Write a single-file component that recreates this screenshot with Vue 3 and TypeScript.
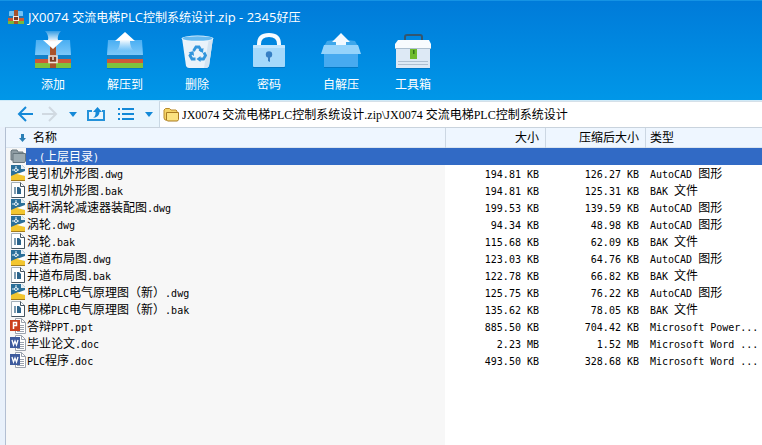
<script setup lang="ts">
import { computed, ref } from 'vue'

type Kind = 'dwg' | 'bak' | 'ppt' | 'doc'
interface Entry {
  name: string
  size: string
  packed: string
  type: string
  kind: Kind
}

const actions = [
  { id: 'add', label: '添加' },
  { id: 'extract', label: '解压到' },
  { id: 'delete', label: '删除' },
  { id: 'password', label: '密码' },
  { id: 'sfx', label: '自解压' },
  { id: 'tools', label: '工具箱' },
]

const archive = 'JX0074 交流电梯PLC控制系统设计'
const path = ref(`${archive}.zip\\${archive}`)

const CAD = 'AutoCAD 图形'
const BAK = 'BAK 文件'
const entries: Entry[] = [
  { name: '曳引机外形图.dwg', size: '194.81 KB', packed: '126.27 KB', type: CAD, kind: 'dwg' },
  { name: '曳引机外形图.bak', size: '194.81 KB', packed: '125.31 KB', type: BAK, kind: 'bak' },
  { name: '蜗杆涡轮减速器装配图.dwg', size: '199.53 KB', packed: '139.59 KB', type: CAD, kind: 'dwg' },
  { name: '涡轮.dwg', size: '94.34 KB', packed: '48.98 KB', type: CAD, kind: 'dwg' },
  { name: '涡轮.bak', size: '115.68 KB', packed: '62.09 KB', type: BAK, kind: 'bak' },
  { name: '井道布局图.dwg', size: '123.03 KB', packed: '64.76 KB', type: CAD, kind: 'dwg' },
  { name: '井道布局图.bak', size: '122.78 KB', packed: '66.82 KB', type: BAK, kind: 'bak' },
  { name: '电梯PLC电气原理图（新）.dwg', size: '125.75 KB', packed: '76.22 KB', type: CAD, kind: 'dwg' },
  { name: '电梯PLC电气原理图（新）.bak', size: '135.62 KB', packed: '78.05 KB', type: BAK, kind: 'bak' },
  { name: '答辩PPT.ppt', size: '885.50 KB', packed: '704.42 KB', type: 'Microsoft Power...', kind: 'ppt' },
  { name: '毕业论文.doc', size: '2.23 MB', packed: '1.52 MB', type: 'Microsoft Word ...', kind: 'doc' },
  { name: 'PLC程序.doc', size: '493.50 KB', packed: '328.68 KB', type: 'Microsoft Word ...', kind: 'doc' },
]

// Latin runs are set in their own face and size, so each text is split at script changes.
function runs(text: string) {
  return (text.match(/[\x20-\x7e]+|[^\x20-\x7e]+/g) ?? []).map((t) => ({ t, latin: /^[\x20-\x7e]/.test(t) }))
}

const titleRuns = runs(`${archive}.zip - 2345好压`)
const parentRuns = runs('..(上层目录)')
const rows = computed(() =>
  entries.map((e) => ({ ...e, nameRuns: runs(e.name), typeRuns: runs(e.type) })),
)
</script>

<template>
  <div class="window">
    <header class="top">
      <h1 class="title">
        <svg class="app-icon" viewBox="0 0 16 14" aria-hidden="true">
          <rect x="1" y="1" width="14" height="6" rx="1" fill="#72c3f5" />
          <rect x="0" y="6" width="16" height="3" fill="#1b78b8" />
          <rect x="0" y="8" width="16" height="3" fill="#d05a34" />
          <rect x="0" y="11" width="16" height="3" fill="#79b83a" />
          <rect x="6" y="0" width="4" height="14" fill="#a6512c" />
          <rect x="5.500" y="6.500" width="5" height="4" fill="#7c3520" stroke="#f4e4dc" />
        </svg>
        <span><span v-for="(r, i) in titleRuns" :key="i" :class="{ 'title-latin': r.latin }">{{ r.t }}</span></span>
      </h1>
      <nav class="actions">
        <button v-for="a in actions" :key="a.id" class="action" type="button">
          <svg class="action-icon" viewBox="0 0 40 40" aria-hidden="true">
            <defs>
              <linearGradient id="lid" x1="0" y1="0" x2="0" y2="1">
                <stop offset="0" stop-color="#49aef2" />
                <stop offset="1" stop-color="#7cc8fa" />
              </linearGradient>
              <linearGradient id="down" x1="0" y1="0" x2="0" y2="1">
                <stop offset="0" stop-color="#fff" stop-opacity="0.2" />
                <stop offset="0.6" stop-color="#fff" />
              </linearGradient>
              <linearGradient id="up" x1="0" y1="0" x2="0" y2="1">
                <stop offset="0.4" stop-color="#fff" />
                <stop offset="1" stop-color="#fff" stop-opacity="0" />
              </linearGradient>
            </defs>
            <g v-if="a.id === 'add' || a.id === 'extract'">
              <rect x="2" y="37" width="36" height="1" fill="#0269b0" opacity="0.6" />
              <path d="M3 9h34l1 15H2z" fill="url(#lid)" />
              <rect x="2" y="24" width="36" height="4" fill="#1280c8" />
              <rect x="2" y="28" width="36" height="4" fill="#cf5838" />
              <rect x="2" y="32" width="36" height="5" fill="#7fc23c" />
            </g>
            <g v-if="a.id === 'add'">
              <rect x="17" y="9" width="6" height="28" fill="#a9532c" />
              <path d="M17 24h6v4h-6z" fill="#7a3a20" />
              <rect x="16" y="25" width="8" height="6.500" fill="#7d3b22" stroke="#f1e3da" stroke-width="1.600" />
              <path d="M20 26v3" stroke="#f1e3da" stroke-width="1.500" />
              <path d="M12 0h16q-4 4-3 9h5L20 18 10 9h5Q16 4 12 0z" fill="url(#down)" />
            </g>
            <path v-if="a.id === 'extract'" d="M20 1 30 10h-5q0 7 4 10H11q4-3 4-10h-5z" fill="url(#up)" />
            <g v-if="a.id === 'delete'">
              <path d="M5 8h31l-4 28q-1 2-3 2H12q-2 0-3-2z" fill="#0873be" opacity="0.35" />
              <path d="M5 7h31l-4 28q-1 2-3 2H12q-2 0-3-2z" fill="#e9f2fa" />
              <path d="M32 7h4l-4 28q-1 2-3 2h-2z" fill="#d3e3f1" />
              <ellipse cx="20.500" cy="7.500" rx="16" ry="3" fill="#f8fcff" />
              <ellipse cx="20.500" cy="7.500" rx="15" ry="2.300" fill="#67baf0" />
              <g fill="none" stroke="#3295dc" stroke-width="2.800">
                <path d="m16.500 20 2.500-4h3l2.500 4" />
                <path d="m27 21.500 1.500 3-2 3.500h-4" />
                <path d="M18.500 28H15l-2-3.500 2-3" />
              </g>
              <path d="m26.500 17-.5 5-4.500-2.500zM23.500 25v6l-4-3zM11.500 21.500l5-1.500.5 5z" fill="#3295dc" />
            </g>
            <g v-if="a.id === 'password'">
              <path d="M10 16v-3q0-9 10-9t10 9v3" fill="none" stroke="#f8fcff" stroke-width="4" />
              <rect x="4" y="36" width="32" height="1" fill="#0269b0" opacity="0.6" />
              <rect x="4" y="14" width="32" height="22" rx="1" fill="#a5d9fb" />
              <path d="M4 15q0-1 1-1h30q1 0 1 1v2H4z" fill="#c2e6fe" />
              <circle cx="20" cy="23.500" r="3.200" fill="#367fc4" />
              <path d="M19 25h2v6l-2-1z" fill="#367fc4" />
            </g>
            <g v-if="a.id === 'sfx'">
              <path d="M6 10 2 17h36l-4-7-7-1H13z" fill="#59b5f0" opacity="0.7" />
              <path d="M20 2 29 11h-4v5H15v-5h-4z" fill="#f2f9ff" />
              <rect x="3" y="36" width="34" height="1" fill="#0269b0" opacity="0.6" />
              <path d="M3 17h34v19H3z" fill="#47aaf0" />
              <path d="M3 14h34l3 9H0z" fill="#95d3fb" />
            </g>
            <g v-if="a.id === 'tools'">
              <path d="M12 9V6q0-2 2-2h13q2 0 2 2v3" fill="none" stroke="#34566f" stroke-width="2" />
              <rect x="3" y="37" width="34" height="1" fill="#0269b0" opacity="0.6" />
              <path d="M3 16h34v21H3z" fill="#dde9f5" />
              <path d="M5 9h31l2 4v4H2v-4z" fill="#f8fbfe" />
              <path d="M2 17h36v1H2zM5 30h30v1H5zM5 33h30v1H5z" fill="#aebfd0" />
              <path d="M17 18h7v10h-7z" fill="#6fbb2e" />
              <path d="M20 19h1.500v4H20z" fill="#33701a" />
            </g>
          </svg>
          <span>{{ a.label }}</span>
        </button>
      </nav>
    </header>

    <div class="bar">
      <button class="tool" type="button" aria-label="后退">
        <svg viewBox="0 0 16 16"><path d="M9 1 2 8l7 7M2 8h14" fill="none" stroke="#1489d8" stroke-width="2" /></svg>
      </button>
      <button class="tool forward" type="button" aria-label="前进">
        <svg viewBox="0 0 16 16"><path d="m7 1 7 7-7 7M14 8H0" fill="none" stroke="#d0d9e1" stroke-width="2" /></svg>
      </button>
      <button class="tool caret" type="button" aria-label="历史">
        <svg viewBox="0 0 8 5"><path d="M0 0h8L4 5z" fill="#1489d8" /></svg>
      </button>
      <button class="tool wide" type="button" aria-label="向上">
        <svg viewBox="0 0 18 16">
          <path d="M5 5H1v9h16V5h-2" fill="none" stroke="#2492da" stroke-width="2" />
          <path d="M10.500 1 15 6h-2.500q0 5-6.500 6 3-2 2.500-6H6z" fill="#1489d8" />
        </svg>
      </button>
      <button class="tool list" type="button" aria-label="视图">
        <svg viewBox="0 0 16 12">
          <path d="M0 0h2v2H0zM0 5h2v2H0zM0 10h2v2H0zM4 0h12v2H4zM4 5h12v2H4zM4 10h12v2H4z" fill="#1489d8" />
        </svg>
      </button>
      <button class="tool caret" type="button" aria-label="视图选项">
        <svg viewBox="0 0 8 5"><path d="M0 0h8L4 5z" fill="#1489d8" /></svg>
      </button>
      <label class="address">
        <svg class="folder" viewBox="0 0 16 14" aria-hidden="true">
          <path d="M1 10V2l1.500-1.500h4L8 2h5l1 1v8l-2 1H2z" fill="#f4d365" stroke="#b98b2c" />
          <path d="M3.500 4.500h12v7l-1 1.500H4.500l-1-1z" fill="#fbe27f" stroke="#a87a20" />
        </svg>
        <input v-model="path" class="path" type="text" aria-label="路径" spellcheck="false" />
      </label>
    </div>

    <main class="pane">
      <table class="files">
        <colgroup>
          <col />
          <col class="c-size" />
          <col class="c-size" />
          <col class="c-type" />
        </colgroup>
        <thead>
          <tr>
            <th class="name-head">
              <svg class="sort" viewBox="0 0 7 8" aria-hidden="true">
                <path d="M2 0h3v4h2L3.500 8 0 4h2z" fill="#2b7fb6" />
              </svg>名称
            </th>
            <th class="num">大小</th>
            <th class="num">压缩后大小</th>
            <th>类型</th>
          </tr>
        </thead>
        <tbody>
          <tr class="selected">
            <td colspan="4">
              <div class="cell">
                <svg class="file-icon" viewBox="0 0 16 16" aria-hidden="true">
                  <path d="M1 12V3l1-1h5l1 2h5v8z" fill="#8f9ca3" stroke="#68777f" />
                  <path d="M3 5.500h12.500V13l-1 1.500H3z" fill="#9caab0" stroke="#66757c" />
                </svg>
                <span class="label"><span v-for="(r, i) in parentRuns" :key="i" :class="{ latin: r.latin }">{{ r.t }}</span></span>
              </div>
            </td>
          </tr>
          <tr v-for="row in rows" :key="row.name">
            <td>
              <div class="cell">
                <svg class="file-icon" viewBox="0 0 16 16" aria-hidden="true">
                  <g v-if="row.kind === 'dwg'">
                    <path d="M1 0h11l3 3v13H1z" fill="#2b6f99" />
                    <path d="M11 0h1l3 3v1h-4z" fill="#e6eff5" />
                    <path d="M1 11 8 8l7 3v4H1z" fill="#f3c62f" />
                    <path d="m7 9 8-3v5z" fill="#fff" />
                    <path d="M1 15h14v1H1z" fill="#a47c1c" />
                    <path d="M2 5h7M6 1v6" stroke="#e4f1f8" />
                    <circle cx="6" cy="5" r="1.500" fill="#2b6f99" stroke="#e4f1f8" />
                  </g>
                  <g v-else-if="row.kind === 'bak'">
                    <path d="M1.500.5h9l4 4v11h-13z" fill="#fff" stroke="#a4b0ba" />
                    <path d="M10.500.5v4h4v11h-13" fill="none" stroke="#44535f" />
                    <path d="M4 5h2v7H4z" fill="#7d9bb0" />
                    <path d="M7 5h2l2 2v5H7z" fill="#2c648b" />
                  </g>
                  <g v-else>
                    <path d="M5.500.5h6l4 4v11h-10z" fill="#fff" stroke="#9ba2ad" />
                    <path d="M11.500.5v4h4M10 7.500h4M10 9.500h4M10 11.500h4M7 13.500h7" fill="none" stroke="#9ba2ad" />
                    <path d="M0 2h10v11H0z" :fill="row.kind === 'ppt' ? '#cb3f1d' : '#3e5b9d'" />
                    <path v-if="row.kind === 'ppt'" d="M3.500 11V4.500h3v3h-3" fill="none" stroke="#fff" stroke-width="1.500" />
                    <path v-else d="m2 5 1.500 5L5 6l1.500 4L8 5" fill="none" stroke="#fff" stroke-width="1.300" />
                  </g>
                </svg>
                <span class="label"><span v-for="(r, i) in row.nameRuns" :key="i" :class="{ latin: r.latin }">{{ r.t }}</span></span>
              </div>
            </td>
            <td class="num"><span class="latin">{{ row.size }}</span></td>
            <td class="num"><span class="latin">{{ row.packed }}</span></td>
            <td class="type"><span v-for="(r, i) in row.typeRuns" :key="i" :class="{ latin: r.latin }">{{ r.t }}</span></td>
          </tr>
        </tbody>
      </table>
    </main>
  </div>
</template>

<style>
body {
  margin: 0;
}
</style>

<style scoped>
.window {
  display: flex;
  flex-direction: column;
  min-height: 100vh;
  background: #e9f1fb;
  font: 12px/16px "Noto Sans CJK SC", sans-serif;
  color: #000;
}
button,
input {
  margin: 0;
  padding: 0;
  border: 0;
  background: none;
  font: inherit;
  color: inherit;
}
svg {
  display: block;
  flex: none;
}
.top {
  box-sizing: border-box;
  height: 100px;
  padding: 8px 8px 0;
  border-top: 1px solid #1593e4;
  background: linear-gradient(#007bd9, #0097e8);
  color: #fff;
}
.title {
  display: flex;
  align-items: center;
  gap: 4px;
  height: 16px;
  margin: 0;
  font: 12px/16px "Noto Sans CJK SC", sans-serif;
  white-space: pre;
}
.title-latin {
  font-family: "Open Sans", sans-serif;
  font-size: 13px;
}
.app-icon {
  width: 16px;
  height: 14px;
}
.actions {
  display: flex;
  padding: 6px 9px 0;
}
.action {
  display: flex;
  flex-direction: column;
  align-items: center;
  gap: 5px;
  width: 72px;
}
.action-icon {
  width: 40px;
  height: 40px;
}
.bar {
  display: flex;
  align-items: center;
  height: 26px;
  padding-left: 17px;
  border-top: 1px solid #cfeaf8;
  background: #e9f5fd;
}
.tool {
  display: flex;
  align-items: center;
  width: 16px;
}
.tool svg {
  width: 100%;
}
.forward {
  margin-left: 9px;
}
.caret {
  width: 8px;
  margin-left: 11px;
}
.wide {
  width: 18px;
  margin-left: 10px;
}
.list {
  margin-left: 13px;
}
.address {
  display: flex;
  flex: 1;
  align-items: center;
  align-self: stretch;
  gap: 3px;
  margin-left: 6px;
  padding-left: 3px;
  border-top: 1px solid #d5e0e8;
  border-left: 1px solid #c9d8e4;
  background: #fff;
}
.folder {
  width: 16px;
  height: 14px;
}
.path {
  flex: 1;
  min-width: 0;
  outline: 0;
  font: 12px/16px "Liberation Serif", "Noto Sans CJK SC", serif;
}
.pane {
  flex: 1;
  margin-left: 5px;
  border-top: 1px solid #c9d3dd;
  border-left: 1px solid #b3bfd2;
  background: linear-gradient(to right, #f7f7f7 calc(100% - 317px), #fff 0);
}
.files {
  width: 100%;
  table-layout: fixed;
  border-collapse: collapse;
}
.c-size {
  width: 100px;
}
.c-type {
  width: 117px;
}
th,
td {
  padding: 0;
  text-align: left;
  vertical-align: top;
  white-space: nowrap;
  overflow: hidden;
  font-weight: 400;
}
th {
  box-sizing: border-box;
  height: 20px;
  padding: 0 6px 0 5px;
  line-height: 18px;
  background: #eef6ff;
  box-shadow: inset 1px 0 #ccd7e3, inset 0 -1px #dbe5f0;
}
.name-head {
  padding-left: 13px;
  box-shadow: inset 0 -1px #dbe5f0;
}
.sort {
  display: inline-block;
  width: 7px;
  height: 8px;
  margin-right: 7px;
}
td {
  height: 17px;
  line-height: 15px;
}
.num {
  padding-right: 6px;
  text-align: right;
}
.type {
  padding-left: 5px;
}
.cell {
  display: flex;
  height: 17px;
  padding-left: 4px;
}
.file-icon {
  width: 16px;
  height: 16px;
}
.label {
  flex: 1;
  padding-left: 1px;
}
.selected .label {
  background: #316ac5;
  color: #fff;
}
.latin {
  font-family: "DejaVu Sans Mono", monospace;
  font-size: 10px;
  line-height: 12px;
  white-space: pre;
}
</style>
